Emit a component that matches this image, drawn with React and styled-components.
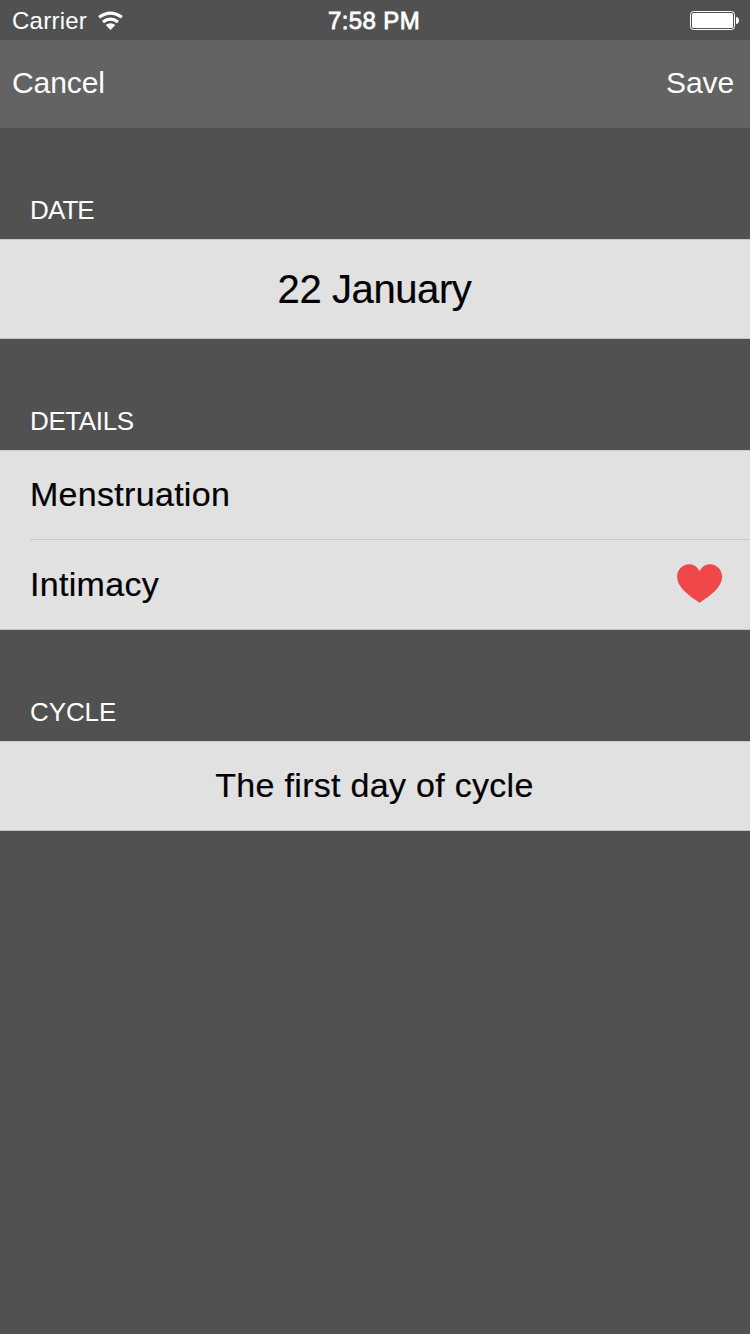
import React from "react";
import styled, { createGlobalStyle } from "styled-components";

const GlobalStyle = createGlobalStyle`
  * { box-sizing: border-box; }
  body {
    margin: 0;
    background: #515151;
    font-family: "Liberation Sans", Arial, Helvetica, sans-serif;
  }
`;

const Screen = styled.main`
  display: flex;
  flex-direction: column;
  width: 750px;
  height: 1334px;
  overflow: hidden;
  background: #515151;
  border-bottom: 1px solid #5a4f55;
  color: #fff;
`;

const StatusBar = styled.header`
  display: grid;
  grid-template-columns: 1fr auto 1fr;
  align-items: center;
  height: 40px;
  padding: 1px 11px 0 12px;
  font-size: 24px;
  line-height: 38px;
`;

const Carrier = styled.div`
  display: flex;
  align-items: center;
  gap: 11px;
  letter-spacing: 0.25px;
`;

const Clock = styled.time`
  padding-right: 3px;
  letter-spacing: 0.4px;
  -webkit-text-stroke: 0.8px #fff;
`;

const Battery = styled.svg`
  justify-self: end;
`;

const NavBar = styled.nav`
  display: flex;
  justify-content: space-between;
  height: 88px;
  padding: 0 16px 0 12px;
  background: #636363;
`;

const NavButton = styled.button`
  padding: 0 0 2px;
  border: 0;
  background: none;
  color: inherit;
  font: 30px/86px "Liberation Sans", Arial, sans-serif;
  letter-spacing: -0.1px;
`;

const SectionTitle = styled.h2`
  height: 111px;
  margin: 0;
  padding: 67px 30px 0;
  font-size: 26px;
  font-weight: 400;
  line-height: 30px;
  letter-spacing: ${(p) => p.$spacing || 0}px;
`;

const Group = styled.section`
  border-top: 1px solid #c8c8c8;
  border-bottom: 1px solid #c0c3c2;
  background: #e1e1e1;
  color: #000;
`;

const Row = styled.div`
  display: flex;
  align-items: center;
  justify-content: ${(p) => (p.$centered ? "center" : "space-between")};
  height: 88px;
  margin-left: ${(p) => (p.$centered ? 0 : 30)}px;
  padding: 0 ${(p) => (p.$centered ? 1 : 27)}px 2px 0;
  font-size: 34px;
  letter-spacing: 0.3px;
  -webkit-text-stroke: 0.2px #000;

  & + & {
    height: 90px;
    padding-bottom: 1px;
    border-top: 1px solid #c8c8c8;
  }
`;

const DateRow = styled(Row)`
  height: 98px;
  padding-top: 1px;
  padding-bottom: 0;
  font-size: 40px;
  letter-spacing: -0.4px;
`;

const Heart = styled.svg`
  margin-bottom: 2px;
`;

const WifiIcon = () => (
  <svg width="25" height="19" viewBox="0 0 25 19" fill="none" stroke="#fff">
    <path d="M1.1 6.3Q12.5 -2.2 23.9 6.3" strokeWidth="3.2" />
    <path d="M5 10.9Q12.5 5.2 20 10.9" strokeWidth="3.2" />
    <path d="M7.7 14.1Q12.5 10.3 17.3 14.1L12.5 18.9z" fill="#fff" stroke="none" />
  </svg>
);

const BatteryIcon = () => (
  <Battery width="49" height="19" viewBox="0 0 49 19">
    <rect x="0.5" y="0.5" width="44" height="18" rx="3" fill="none" stroke="#fff" />
    <rect x="2" y="2" width="41" height="15" rx="1.5" fill="#fff" />
    <path d="M46 6c4 0 4 7 0 7z" fill="#fff" />
  </Battery>
);

const HeartIcon = () => (
  <Heart width="46" height="39" viewBox="0 0 46 39" fill="#f04848">
    <path d="M22.6 7.2C20.3 2.8 16.7 0.2 12.2 0.2C5.3 0.2 0.1 5.8 0.1 12.8C0.1 22.8 11 31.3 22.6 38.7C34.2 31.3 45.1 22.8 45.1 12.8C45.1 5.8 39.9 0.2 33 0.2C28.5 0.2 24.9 2.8 22.6 7.2Z" />
  </Heart>
);

export default function App() {
  return (
    <>
      <GlobalStyle />
      <Screen>
        <StatusBar>
          <Carrier>
            Carrier
            <WifiIcon />
          </Carrier>
          <Clock>7:58 PM</Clock>
          <BatteryIcon />
        </StatusBar>
        <NavBar>
          <NavButton>Cancel</NavButton>
          <NavButton>Save</NavButton>
        </NavBar>

        <SectionTitle $spacing={-0.9}>DATE</SectionTitle>
        <Group>
          <DateRow $centered>22 January</DateRow>
        </Group>

        <SectionTitle $spacing={-0.4}>DETAILS</SectionTitle>
        <Group>
          <Row>Menstruation</Row>
          <Row>
            Intimacy
            <HeartIcon />
          </Row>
        </Group>

        <SectionTitle $spacing={-0.1}>CYCLE</SectionTitle>
        <Group>
          <Row $centered>The first day of cycle</Row>
        </Group>
      </Screen>
    </>
  );
}
